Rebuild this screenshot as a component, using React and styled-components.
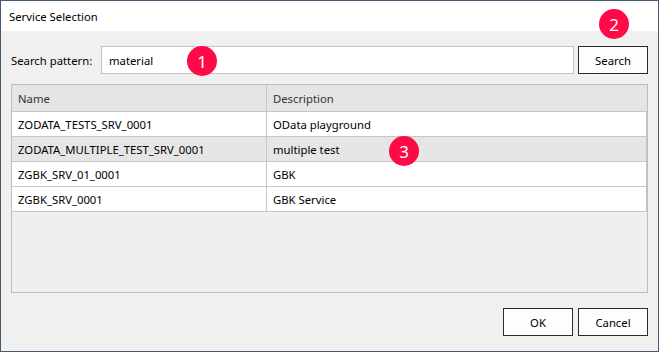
import React from "react";
import styled, { createGlobalStyle } from "styled-components";

const Global = createGlobalStyle`
  html, body {
    margin: 0;
    padding: 0;
    height: 100%;
    background: #f0f0f0;
  }
  #root {
    height: 100%;
  }
  * {
    box-sizing: border-box;
  }
`;

const Window = styled.div`
  position: relative;
  height: 352px;
  width: 659px;
  border: 1px solid #435a70;
  background: #f0f0f0;
  display: flex;
  flex-direction: column;
  font-family: "Noto Sans", "Liberation Sans", sans-serif;
  font-size: 11.3px;
  color: #000;
`;

const TitleBar = styled.div`
  height: 30px;
  background: #fff;
  display: flex;
  align-items: center;
  padding-left: 8px;
  flex-shrink: 0;
`;

const Body = styled.div`
  flex: 1;
  display: flex;
  flex-direction: column;
  padding: 15px 10px 15px 10px;
`;

const SearchRow = styled.div`
  display: flex;
  align-items: center;
  height: 28px;
`;

const Label = styled.span`
  width: 90px;
  flex-shrink: 0;
`;

const Input = styled.div`
  flex: 1;
  height: 28px;
  background: #fff;
  border: 1px solid #c3c3c3;
  display: flex;
  align-items: center;
  padding-left: 7px;
`;

const Button = styled.button`
  width: 70px;
  height: 28px;
  margin-left: ${(p) => p.$gap || 0}px;
  background: #fdfdfd;
  border: 1px solid #2b2b2b;
  font-family: inherit;
  font-size: inherit;
  color: #000;
  padding: 0;
`;

const Grid = styled.div`
  margin-top: 10px;
  height: 209px;
  border: 1px solid #bdbdbd;
  background: #efefef;
  display: flex;
  flex-direction: column;
`;

const Row = styled.div`
  display: grid;
  grid-template-columns: 254px 1fr;
  height: ${(p) => (p.$head ? 27 : 25)}px;
  background: ${(p) => (p.$head ? "#e5e5e5" : p.$selected ? "#e6e6e6" : "#fff")};
  border-bottom: 1px solid #c6c6c6;
  border-right: ${(p) => (p.$head ? 0 : 1)}px solid #c6c6c6;
`;

const Cell = styled.div`
  display: flex;
  align-items: center;
  padding-left: 6px;
  color: ${(p) => (p.$head ? "#333" : "#000")};
  & + & {
    border-left: 1px solid #c6c6c6;
  }
`;

const Footer = styled.div`
  margin-top: auto;
  display: flex;
  justify-content: flex-end;
`;

const Badge = styled.div`
  position: absolute;
  width: 30px;
  height: 30px;
  border-radius: 50%;
  background: #ff0a47;
  color: #fff;
  font-size: 17px;
  display: flex;
  align-items: center;
  justify-content: center;
  left: ${(p) => p.$x - 15}px;
  top: ${(p) => p.$y - 15}px;
`;

const services = [
  ["ZODATA_TESTS_SRV_0001", "OData playground"],
  ["ZODATA_MULTIPLE_TEST_SRV_0001", "multiple test"],
  ["ZGBK_SRV_01_0001", "GBK"],
  ["ZGBK_SRV_0001", "GBK Service"],
];

const App = () => {
  return (
    <>
      <Global />
      <Window>
        <TitleBar>Service Selection</TitleBar>
        <Body>
          <SearchRow>
            <Label>Search pattern:</Label>
            <Input>material</Input>
            <Button $gap={4}>Search</Button>
          </SearchRow>
          <Grid>
            <Row $head>
              <Cell $head>Name</Cell>
              <Cell $head>Description</Cell>
            </Row>
            {services.map(([name, desc], i) => (
              <Row key={name} $selected={i === 1}>
                <Cell>{name}</Cell>
                <Cell>{desc}</Cell>
              </Row>
            ))}
          </Grid>
          <Footer>
            <Button>OK</Button>
            <Button $gap={5}>Cancel</Button>
          </Footer>
        </Body>
        <Badge $x={201} $y={60}>1</Badge>
        <Badge $x={613} $y={23}>2</Badge>
        <Badge $x={403} $y={150}>3</Badge>
      </Window>
    </>
  );
};

export default App;
